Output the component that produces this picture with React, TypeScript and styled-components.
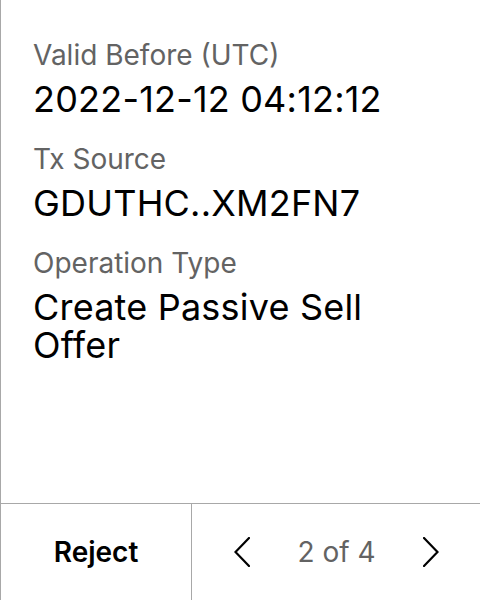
import React from 'react';
import styled, { createGlobalStyle } from 'styled-components';

const GlobalStyle = createGlobalStyle`
  html, body {
    margin: 0;
    padding: 0;
    background: #ffffff;
  }
  body {
    font-family: Inter, "Noto Sans", sans-serif;
  }
`;

const Screen = styled.div`
  width: 480px;
  height: 600px;
  box-sizing: border-box;
  border-left: 1px solid #a8a8a8;
  display: flex;
  flex-direction: column;
  background: #fff;
`;

const Details = styled.div`
  flex: 1;
  padding: 38px 32px 0 32px;
  display: flex;
  flex-direction: column;
  gap: 24px;
`;

const Field = styled.div`
  display: flex;
  flex-direction: column;
  gap: 8px;
`;

const Label = styled.div`
  font-size: 28px;
  line-height: 34px;
  color: #636363;
`;

const Value = styled.div`
  font-size: 36px;
  line-height: 38px;
  color: #000000;
  letter-spacing: 0.2px;
`;

const Footer = styled.div`
  height: 96px;
  border-top: 1px solid #a8a8a8;
  display: grid;
  grid-template-columns: 191px 1fr;
`;

const RejectButton = styled.button`
  border: none;
  border-right: 1px solid #a8a8a8;
  background: transparent;
  font-family: Inter, sans-serif;
  font-weight: 600;
  font-size: 28px;
  color: #000;
  padding: 0;
`;

const Pager = styled.div`
  display: flex;
  align-items: center;
  justify-content: space-between;
  padding: 0 41px 0 42px;
`;

const ArrowButton = styled.button`
  border: none;
  background: transparent;
  padding: 0;
  width: 16px;
  height: 30px;
  display: flex;
  align-items: center;
  justify-content: center;
`;

const PageCount = styled.span`
  font-size: 28px;
  color: #636363;
`;

const Chevron = ({ dir }: { dir: 'left' | 'right' }) => (
  <svg width="16" height="30" viewBox="0 0 16 30" fill="none">
    <path
      d={dir === 'left' ? 'M15 1 L1.5 15 L15 29' : 'M1 1 L14.5 15 L1 29'}
      stroke="#000"
      strokeWidth="2.2"
      strokeLinecap="round"
      strokeLinejoin="miter"
    />
  </svg>
);

const fields = [
  { label: 'Valid Before (UTC)', value: '2022-12-12 04:12:12' },
  { label: 'Tx Source', value: 'GDUTHC..XM2FN7' },
  { label: 'Operation Type', value: 'Create Passive Sell Offer' },
];

export default function App() {
  return (
    <>
      <GlobalStyle />
      <Screen>
        <Details>
          {fields.map((f) => (
            <Field key={f.label}>
              <Label>{f.label}</Label>
              <Value>{f.value}</Value>
            </Field>
          ))}
        </Details>
        <Footer>
          <RejectButton>Reject</RejectButton>
          <Pager>
            <ArrowButton>
              <Chevron dir="left" />
            </ArrowButton>
            <PageCount>2 of 4</PageCount>
            <ArrowButton>
              <Chevron dir="right" />
            </ArrowButton>
          </Pager>
        </Footer>
      </Screen>
    </>
  );
}
